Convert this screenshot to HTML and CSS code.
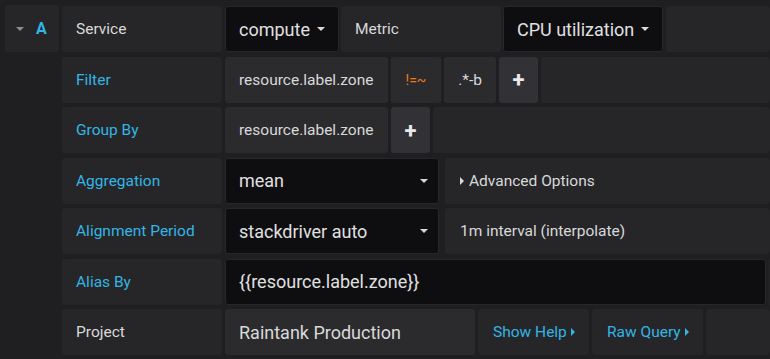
FILE: index.html
```html
<!DOCTYPE html>
<html lang="en">
<head>
    <meta charset="UTF-8">
    <title>Query editor</title>
    <link rel="stylesheet" href="styles.css">
</head>
<body>

    <div class="queryBox">
        <div class="queryHead">
            <span class="caretDown"></span>
            <span class="refId">A</span>
        </div>
        <div class="queryRows">
            <div class="formRow">
                <div class="label">Service</div>
                <div class="select">compute <span class="caretDown small"></span></div>
                <div class="label metric">Metric</div>
                <div class="select cpu">CPU utilization <span class="caretDown small"></span></div>
                <div class="filler"></div>
            </div>
            <div class="formRow">
                <div class="label blue">Filter</div>
                <div class="segment key">resource.label.zone</div>
                <div class="segment op">!=~</div>
                <div class="segment val">.*-b</div>
                <div class="segment plus">+</div>
                <div class="filler"></div>
            </div>
            <div class="formRow">
                <div class="label blue">Group By</div>
                <div class="segment key">resource.label.zone</div>
                <div class="segment plus">+</div>
                <div class="filler"></div>
            </div>
            <div class="formRow">
                <div class="label blue">Aggregation</div>
                <div class="select wide">mean <span class="caretDown small"></span></div>
                <div class="filler text"><span class="caretRight"></span>Advanced Options</div>
            </div>
            <div class="formRow">
                <div class="label blue">Alignment Period</div>
                <div class="select wide">stackdriver auto <span class="caretDown small"></span></div>
                <div class="filler text">1m interval (interpolate)</div>
            </div>
            <div class="formRow">
                <div class="label blue">Alias By</div>
                <div class="input">{{resource.label.zone}}</div>
                <div class="filler"></div>
            </div>
            <div class="formRow">
                <div class="label">Project</div>
                <div class="segment project">Raintank Production</div>
                <div class="segment link">Show Help <span class="caretRight blue"></span></div>
                <div class="segment link">Raw Query <span class="caretRight blue"></span></div>
                <div class="filler"></div>
            </div>
        </div>
    </div>

</body>
</html>
```

FILE: styles.css
```css
*{
    padding: 0;
    margin: 0;
    box-sizing: border-box;
}
body{
    background: #1f1f21;
    font-family: Roboto, "Liberation Sans", sans-serif;
    font-size: 15.5px;
    color: #d8d9da;
}
.queryBox{
    display: flex;
    padding: 6px 0 0 5px;
    gap: 3px;
}
.queryHead{
    width: 54px;
    height: 47px;
    margin-top: -1px;
    background: #262629;
    border-radius: 3px;
    display: flex;
    align-items: center;
    padding-left: 11px;
    gap: 12px;
}
.refId{
    color: #33b5e5;
    font-weight: bold;
    font-size: 16px;
}
.caretDown{
    width: 0;
    height: 0;
    border-left: 4px solid transparent;
    border-right: 4px solid transparent;
    border-top: 4px solid #8e8e90;
}
.caretDown.small{
    border-top-color: #d8d9da;
    margin-left: 7px;
}
.caretRight{
    display: inline-block;
    width: 0;
    height: 0;
    border-top: 4px solid transparent;
    border-bottom: 4px solid transparent;
    border-left: 4px solid #d8d9da;
    margin-right: 5px;
}
.caretRight.blue{
    border-left-color: #33b5e5;
    margin: 0 0 0 4px;
}
.queryRows{
    flex: 1;
    display: flex;
    flex-direction: column;
    gap: 4.5px;
}
.formRow{
    display: flex;
    height: 46px;
    gap: 3px;
}
.formRow > div{
    display: flex;
    align-items: center;
    border-radius: 3px;
    white-space: nowrap;
}
.label{
    width: 160px;
    background: #262629;
    padding-left: 14px;
}
.label.blue{
    color: #33b5e5;
}
.label.metric{
    margin-left: -1px;
    width: 160px;
}
.select{
    background: #0e0e10;
    border: 1px solid #27272a;
    padding: 0 13px 0 13px;
    color: #e0e0e1;
    font-size: 18px;
}
.select.cpu{
    margin-left: -1px;
}
.select.wide{
    width: 214px;
    justify-content: space-between;
    padding-right: 10px;
}
.segment{
    background: #2b2b2e;
    padding: 0 14px;
}
.segment.key{
    width: 163px;
}
.segment.op{
    width: 50px;
    justify-content: center;
    color: #eb7b18;
    font-size: 14px;
}
.segment.val{
    width: 52px;
    justify-content: center;
}
.segment.plus{
    width: 39px;
    justify-content: center;
    background: #323236;
    font-weight: bold;
    font-size: 22px;
    color: #e9e9ea;
    padding: 0;
}
.segment.project{
    width: 250px;
    font-size: 18px;
}
.segment.link{
    width: 111px;
    background: #262629;
    color: #33b5e5;
    padding-left: 15px;
}
.input{
    width: 541px;
    background: #0e0e10;
    border: 1px solid #27272a;
    padding-left: 13px;
    font-size: 18px;
    color: #e0e0e1;
}
.filler{
    flex: 1;
    background: #262629;
}
.filler.text{
    padding-left: 15px;
    margin-left: 3px;
}
```
